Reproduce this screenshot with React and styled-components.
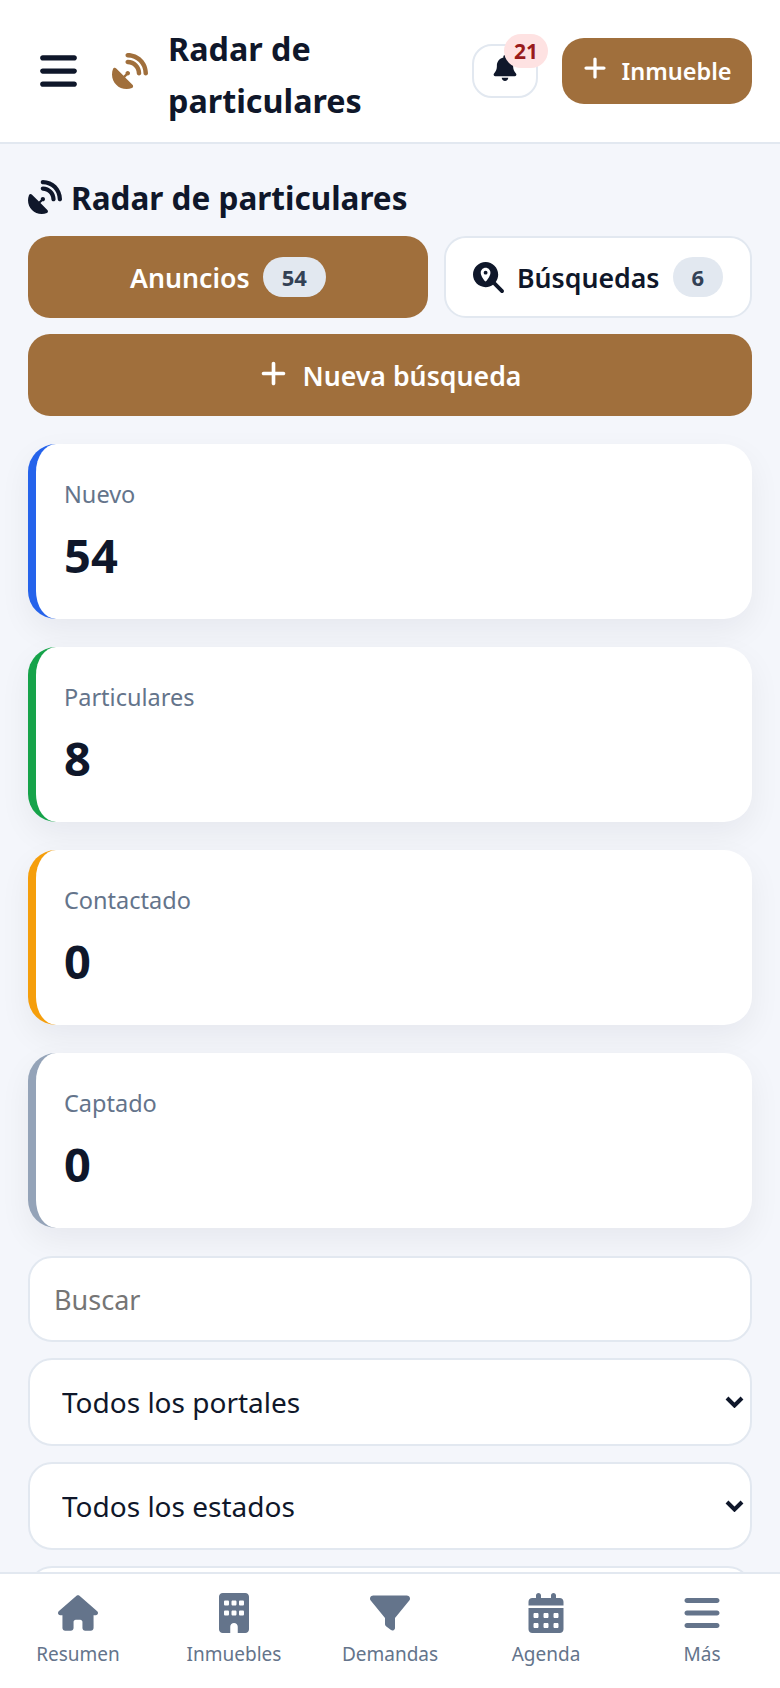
import React from 'react';
import styled, { createGlobalStyle } from 'styled-components';
import {
  FaBars,
  FaBell,
  FaBuilding,
  FaCalendarDays,
  FaFilter,
  FaHouse,
  FaMagnifyingGlassLocation,
  FaPlus,
  FaSatelliteDish,
} from 'react-icons/fa6';

const GlobalStyle = createGlobalStyle`
  html, body {
    margin: 0;
    padding: 0;
    height: 100%;
    overflow: hidden;
    background: #f4f6fb;
  }
  * {
    box-sizing: border-box;
  }
  body, input, select, button {
    font-family: "Noto Sans", "Open Sans", "Liberation Sans", sans-serif;
  }
`;

const stats = [
  { label: 'Nuevo', value: 54, color: '#2563eb' },
  { label: 'Particulares', value: 8, color: '#16a34a' },
  { label: 'Contactado', value: 0, color: '#f59e0b' },
  { label: 'Captado', value: 0, color: '#94a3b8' },
];

const navItems = [
  { label: 'Resumen', Icon: FaHouse },
  { label: 'Inmuebles', Icon: FaBuilding },
  { label: 'Demandas', Icon: FaFilter },
  { label: 'Agenda', Icon: FaCalendarDays },
  { label: 'Más', Icon: FaBars },
];

const Select = ({ children }) => (
  <SelectWrap>
    <FilterSelect>{children}</FilterSelect>
    <Chevron viewBox="0 0 19 12">
      <path d="M2 2l7.5 7.5L17 2" />
    </Chevron>
  </SelectWrap>
);

export default function App() {
  return (
    <Screen>
      <GlobalStyle />
      <Header>
        <MenuButton>
          <FaBars />
        </MenuButton>
        <HeaderDish>
          <FaSatelliteDish />
        </HeaderDish>
        <HeaderTitle>Radar de particulares</HeaderTitle>
        <HeaderActions>
          <BellButton>
            <FaBell />
            <BellBadge>21</BellBadge>
          </BellButton>
          <AddButton>
            <FaPlus />
            Inmueble
          </AddButton>
        </HeaderActions>
      </Header>

      <Main>
        <SectionTitle>
          <FaSatelliteDish />
          Radar de particulares
        </SectionTitle>
        <Tabs>
          <Tab $active>
            Anuncios
            <Count>54</Count>
          </Tab>
          <Tab>
            <FaMagnifyingGlassLocation />
            Búsquedas
            <Count>6</Count>
          </Tab>
        </Tabs>
        <NewSearch>
          <FaPlus />
          Nueva búsqueda
        </NewSearch>

        <StatList>
          {stats.map((stat) => (
            <StatCard key={stat.label} $color={stat.color}>
              <StatLabel>{stat.label}</StatLabel>
              <StatValue>{stat.value}</StatValue>
            </StatCard>
          ))}
        </StatList>

        <Filters>
          <SearchInput placeholder="Buscar" />
          <Select>
            <option>Todos los portales</option>
          </Select>
          <Select>
            <option>Todos los estados</option>
          </Select>
          <Select>
            <option>Todos los tipos</option>
          </Select>
        </Filters>
      </Main>

      <BottomNav>
        {navItems.map(({ label, Icon }) => (
          <NavItem key={label}>
            <NavIcon>
              <Icon />
            </NavIcon>
            {label}
          </NavItem>
        ))}
      </BottomNav>
    </Screen>
  );
}

const Screen = styled.div`
  height: 1688px;
  overflow: hidden;
  position: relative;
  background: #f4f6fb;
  color: #0f172a;
`;

const Header = styled.header`
  height: 144px;
  display: flex;
  align-items: center;
  padding: 0 28px 0 40px;
  background: #fff;
  border-bottom: 2px solid #e2e8f0;
`;

const MenuButton = styled.div`
  display: flex;
  font-size: 42px;
  color: #0f172a;
  width: 37px;
  justify-content: center;
`;

const HeaderDish = styled.div`
  display: flex;
  font-size: 36px;
  color: #a06f3c;
  margin-left: 35px;
`;

const HeaderTitle = styled.h1`
  width: 230px;
  margin: 5px 0 0 20px;
  font-size: 32.3px;
  line-height: 52px;
  font-weight: 700;
  color: #0f172a;
`;

const HeaderActions = styled.div`
  margin-left: auto;
  display: flex;
  align-items: center;
  gap: 24px;
`;

const BellButton = styled.div`
  position: relative;
  width: 66px;
  height: 54px;
  display: flex;
  align-items: center;
  justify-content: center;
  font-size: 26px;
  color: #0f172a;
  background: #fff;
  border: 2px solid #e2e8f0;
  border-radius: 20px;
  svg {
    margin-bottom: 6px;
  }
`;

const BellBadge = styled.span`
  position: absolute;
  top: -12px;
  right: -12px;
  width: 44px;
  height: 34px;
  display: flex;
  align-items: center;
  justify-content: center;
  border-radius: 17px;
  background: #fee2e2;
  color: #991b1b;
  font-size: 21px;
  font-weight: 700;
`;

const AddButton = styled.div`
  height: 66px;
  width: 190px;
  display: flex;
  align-items: center;
  justify-content: center;
  gap: 13px;
  background: #a06f3c;
  color: #fff;
  border-radius: 22px;
  font-size: 23.5px;
  font-weight: 600;
  svg {
    font-size: 26px;
    margin-top: -6px;
  }
`;

const Main = styled.main`
  padding: 31px 28px 0;
`;

const SectionTitle = styled.h2`
  margin: 0 0 17px;
  display: flex;
  align-items: center;
  gap: 9px;
  height: 44px;
  font-size: 31.5px;
  font-weight: 700;
  color: #0f172a;
  svg {
    font-size: 34px;
  }
`;

const Tabs = styled.div`
  display: grid;
  grid-template-columns: 400fr 308fr;
  gap: 16px;
`;

const Tab = styled.div`
  height: 82px;
  display: flex;
  align-items: center;
  justify-content: center;
  gap: 13px;
  border-radius: 22px;
  font-size: 26.7px;
  font-weight: 600;
  background: ${(p) => (p.$active ? '#a06f3c' : '#fff')};
  color: ${(p) => (p.$active ? '#fff' : '#0f172a')};
  border: ${(p) => (p.$active ? '0' : '2px solid #e2e8f0')};
  svg {
    font-size: 31px;
  }
`;

const Count = styled.span`
  padding: 0 19px;
  height: 40px;
  display: flex;
  align-items: center;
  justify-content: center;
  border-radius: 20px;
  background: #e2e8f0;
  color: #334155;
  font-size: 22px;
  font-weight: 700;
`;

const NewSearch = styled.div`
  margin-top: 16px;
  height: 82px;
  display: flex;
  align-items: center;
  justify-content: center;
  gap: 15px;
  border-radius: 22px;
  background: #a06f3c;
  color: #fff;
  font-size: 26.7px;
  font-weight: 600;
  svg {
    font-size: 29px;
    margin-top: -3px;
  }
`;

const StatList = styled.div`
  margin-top: 28px;
  display: flex;
  flex-direction: column;
  gap: 28px;
`;

const StatCard = styled.div`
  height: 175px;
  padding: 31px 28px 0;
  background: #fff;
  border-left: 8px solid ${(p) => p.$color};
  border-radius: 28px;
  box-shadow: 0 12px 32px rgba(15, 23, 42, 0.06);
`;

const StatLabel = styled.div`
  font-size: 23.5px;
  line-height: 38px;
  color: #64748b;
`;

const StatValue = styled.div`
  margin-top: 12px;
  font-size: 47px;
  line-height: 60px;
  font-weight: 700;
  color: #0f172a;
`;

const Filters = styled.div`
  margin-top: 28px;
  display: flex;
  flex-direction: column;
  gap: 16px;
`;

const SearchInput = styled.input`
  width: 100%;
  height: 86px;
  padding: 0 24px;
  background: #fff;
  border: 2px solid #e2e8f0;
  border-radius: 24px;
  font-size: 27px;
  color: #0f172a;
  outline: none;
  &::placeholder {
    color: #757575;
  }
`;

const SelectWrap = styled.div`
  position: relative;
`;

const FilterSelect = styled.select`
  display: block;
  width: 100%;
  height: 88px;
  padding: 0 32px;
  appearance: none;
  background: #fff;
  border: 2px solid #e2e8f0;
  border-radius: 24px;
  font-size: 28px;
  color: #0f172a;
  outline: none;
`;

const Chevron = styled.svg`
  position: absolute;
  top: 38px;
  right: 8px;
  width: 19px;
  height: 12px;
  fill: none;
  stroke: #0f172a;
  stroke-width: 4;
  pointer-events: none;
`;

const BottomNav = styled.nav`
  position: fixed;
  left: 0;
  right: 0;
  bottom: 0;
  height: 116px;
  display: grid;
  grid-template-columns: repeat(5, 1fr);
  padding-top: 18px;
  background: #fff;
  border-top: 2px solid #e2e8f0;
`;

const NavItem = styled.div`
  display: flex;
  flex-direction: column;
  align-items: center;
  gap: 6px;
  font-size: 19px;
  line-height: 28px;
  color: #64748b;
`;

const NavIcon = styled.span`
  display: flex;
  align-items: center;
  justify-content: center;
  height: 42px;
  font-size: 40px;
  svg {
    display: block;
  }
`;
